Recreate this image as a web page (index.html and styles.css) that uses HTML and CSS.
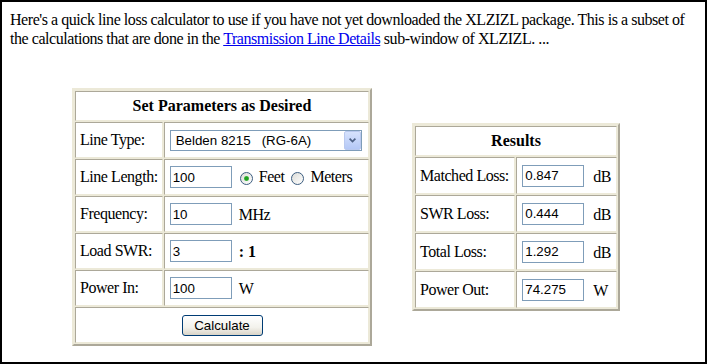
FILE: index.html
```html
<!DOCTYPE html>
<html lang="en">
<head>
  <meta charset="UTF-8">
  <title>Line Loss Calculator</title>
  <link rel="stylesheet" href="styles.css">
</head>
<body>
  <div class="page">
    <p class="intro">Here's a quick line loss calculator to use if you have not yet downloaded the XLZIZL package. This is a subset of the calculations that are done in the <a href="#">Transmission Line Details</a> sub-window of XLZIZL. ...</p>

    <div class="calculator">
      <table class="panel params">
        <tr><th colspan="2">Set Parameters as Desired</th></tr>
        <tr>
          <td class="label">Line Type:</td>
          <td class="value">
            <div class="select-wrap">
              <select class="select">
                <option>Belden 8215&nbsp;&nbsp;&nbsp;(RG-6A)</option>
              </select>
              <span class="select-btn">
                <svg width="7" height="5" viewBox="0 0 7 5"><path d="M0.6 0.6 L3.5 3.6 L6.4 0.6" stroke="#4d6185" stroke-width="1.7" fill="none"/></svg>
              </span>
            </div>
          </td>
        </tr>
        <tr>
          <td class="label">Line Length:</td>
          <td class="value">
            <div class="inline">
              <input class="field" type="text" value="100">
              <input class="radio first" type="radio" name="units" checked><span>Feet</span>
              <input class="radio" type="radio" name="units"><span>Meters</span>
            </div>
          </td>
        </tr>
        <tr>
          <td class="label">Frequency:</td>
          <td class="value"><div class="inline"><input class="field" type="text" value="10"><span class="unit">MHz</span></div></td>
        </tr>
        <tr>
          <td class="label">Load SWR:</td>
          <td class="value"><div class="inline"><input class="field" type="text" value="3"><b class="unit">: 1</b></div></td>
        </tr>
        <tr>
          <td class="label">Power In:</td>
          <td class="value"><div class="inline"><input class="field" type="text" value="100"><span class="unit">W</span></div></td>
        </tr>
        <tr>
          <td class="action" colspan="2"><button class="btn">Calculate</button></td>
        </tr>
      </table>

      <table class="panel results">
        <tr><th colspan="2">Results</th></tr>
        <tr>
          <td class="label">Matched Loss:</td>
          <td class="value"><div class="inline"><input class="field" type="text" value="0.847"><span class="unit">dB</span></div></td>
        </tr>
        <tr>
          <td class="label">SWR Loss:</td>
          <td class="value"><div class="inline"><input class="field" type="text" value="0.444"><span class="unit">dB</span></div></td>
        </tr>
        <tr>
          <td class="label">Total Loss:</td>
          <td class="value"><div class="inline"><input class="field" type="text" value="1.292"><span class="unit">dB</span></div></td>
        </tr>
        <tr>
          <td class="label">Power Out:</td>
          <td class="value"><div class="inline"><input class="field" type="text" value="74.275"><span class="unit">W</span></div></td>
        </tr>
      </table>
    </div>
  </div>
</body>
</html>
```

FILE: styles.css
```css
body {
  margin: 0;
  font-family: "Liberation Serif", "Times New Roman", serif;
  font-size: 16px;
  letter-spacing: -0.45px;
  color: #000;
  background: #fff;
}
.page {
  box-sizing: border-box;
  width: 707px;
  height: 364px;
  border: 2px solid #000;
  padding: 0 8px;
  overflow: hidden;
}
.intro {
  margin: 8px 0 0;
  line-height: 19px;
}
.intro a {
  color: #0000ee;
}
.calculator {
  display: flex;
  align-items: center;
  gap: 40px;
  margin: 40px 0 0 62px;
}

/* old-style beveled tables */
.panel {
  border-collapse: separate;
  border-spacing: 1px;
  border: 2px solid;
  border-color: #ece9d8 #aca899 #aca899 #ece9d8;
  background: #ece9d8;
}
.panel th,
.panel td {
  background: #fff;
  border: 1px solid;
  border-color: #aca899 #ece9d8 #ece9d8 #aca899;
}
.panel th {
  height: 28px;
  padding: 0;
  font-weight: bold;
  letter-spacing: normal;
  text-align: center;
}
.params {
  width: 300px;
}
.params td {
  height: 34px;
}
.results {
  width: 208px;
}
.results td {
  height: 35px;
}
.label {
  padding: 0 4px;
  white-space: nowrap;
}
.params .label {
  width: 77px;
}
.results .label {
  width: 92px;
}
.value {
  padding: 0 5px;
}
.action {
  padding: 0;
  text-align: center;
}
.inline {
  display: flex;
  align-items: center;
  white-space: nowrap;
}

/* form controls, XP look */
.field {
  box-sizing: border-box;
  width: 62px;
  height: 22px;
  margin: 0;
  padding: 0 2px;
  border: 1px solid #7f9db9;
  font: 13.33px "Liberation Sans", Arial, sans-serif;
  color: #000;
}
.unit {
  margin-left: 7px;
  padding-top: 2px;
}
b.unit {
  letter-spacing: normal;
}
.results .unit {
  margin-left: 9px;
}
.select-wrap {
  position: relative;
  width: 192px;
  height: 21px;
}
.select {
  appearance: none;
  box-sizing: border-box;
  width: 100%;
  height: 100%;
  margin: 0;
  padding: 0 0 0 5px;
  border: 1px solid #7f9db9;
  border-radius: 0;
  background: #fff;
  font: 13.33px "Liberation Sans", Arial, sans-serif;
  color: #000;
}
.select-btn {
  position: absolute;
  top: 1px;
  right: 1px;
  box-sizing: border-box;
  width: 17px;
  height: 19px;
  border: 1px solid #b9c9ef;
  border-radius: 2px;
  background: linear-gradient(#d6e2fd, #b4c8f6);
  display: flex;
  align-items: center;
  justify-content: center;
  pointer-events: none;
}
.radio {
  appearance: none;
  box-sizing: border-box;
  width: 13px;
  height: 13px;
  margin: 3px 6px 0 7px;
  border: 1px solid #3c5d80;
  border-radius: 50%;
  background: linear-gradient(135deg, #dcdcd7, #fff);
}
.radio.first {
  margin-left: 8px;
}
.radio:checked {
  background: radial-gradient(circle, #21a121 0 1.8px, #7fcf7f 2.4px, transparent 3px),
    linear-gradient(135deg, #dcdcd7, #fff);
}
.btn {
  width: 81px;
  height: 21px;
  padding: 0;
  border: 1px solid #003c74;
  border-radius: 3px;
  background: linear-gradient(#fff 0%, #f3f2ec 60%, #d9d4c8 100%);
  font: 13.33px "Liberation Sans", Arial, sans-serif;
  color: #000;
}
```
